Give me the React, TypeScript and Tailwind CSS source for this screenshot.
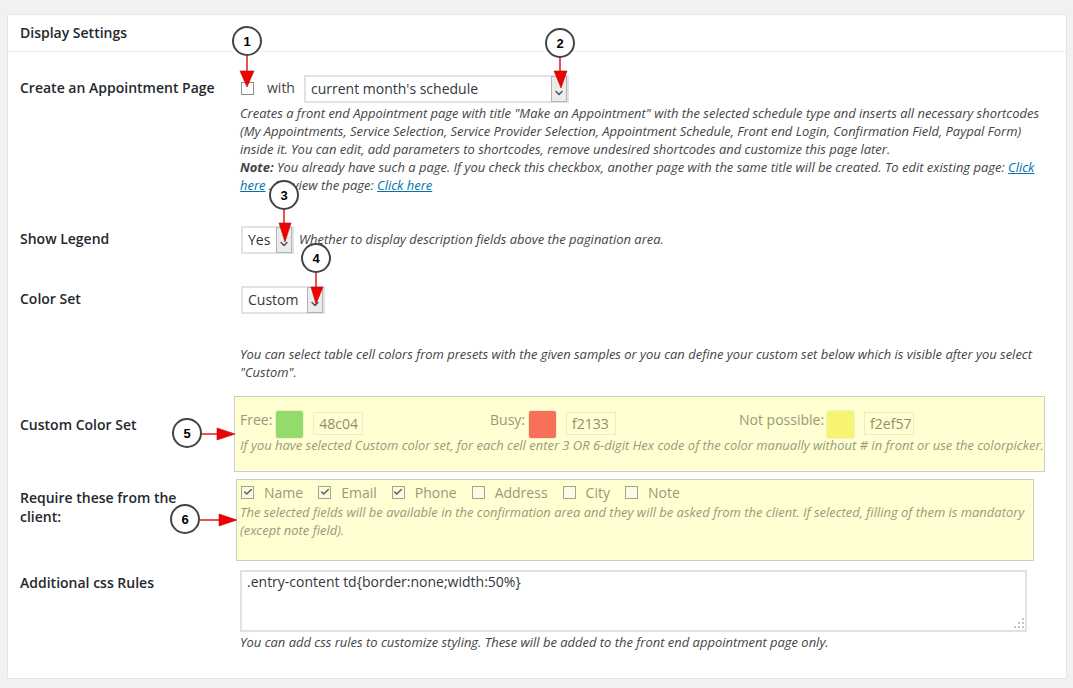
import { Check, ChevronDown } from "lucide-react";
import type { ReactNode } from "react";

const descCls = "text-[12.96px] leading-[18px] italic text-[#444]";

function Select({ text, width }: { text: string; width: string }) {
  return (
    <div className={`flex h-[28px] items-center justify-between border-2 border-[#e2e2e2] bg-white pl-[5px] text-[14px] text-[#32373c] ${width}`}>
      <span className="-mt-[2px]">{text}</span>
      <span className="flex h-[26px] w-[16px] items-end justify-center border border-[#b4b4b4] bg-[#ececec] pb-[2px]">
        <ChevronDown size={12} strokeWidth={3} className="text-[#555]" />
      </span>
    </div>
  );
}

function Box({ checked }: { checked?: boolean }) {
  return (
    <span className="flex h-[13px] w-[13px] shrink-0 items-center justify-center border border-[#a5a58a] bg-[#fbfbe6]">
      {checked && <Check size={10} strokeWidth={3.5} className="text-[#5f5f45]" />}
    </span>
  );
}

function ColorField({ label, swatch, value, width, gap }: { label: string; swatch: string; value: string; width: string; gap: string }) {
  return (
    <div className={`flex items-start ${width}`}>
      <span className="mt-[1px] text-[14px] leading-[18px]">{label}</span>
      <span className={`h-[29px] w-[29px] rounded-[3px] border border-[#f2f2c8] ${gap} ${swatch}`} />
      <span className="mt-[2px] ml-[9px] flex h-[23px] w-[50px] items-center border border-[#ececc4] pr-[2px] pl-[5px] text-[14px] text-[#8f8f6c]">
        <span className="overflow-hidden whitespace-nowrap">{value}</span>
      </span>
    </div>
  );
}

function Row({ label, labelCls, className, children }: { label: string; labelCls: string; className: string; children: ReactNode }) {
  return (
    <div className={`flex ${className}`}>
      <div className="w-[220px] shrink-0">
        <div className={`w-[170px] text-[14px] leading-[19px] font-semibold whitespace-pre-line text-[#23282d] ${labelCls}`}>{label}</div>
      </div>
      <div className="min-w-0 flex-1">{children}</div>
    </div>
  );
}

const fields = [
  { name: "Name", checked: true },
  { name: "Email", checked: true },
  { name: "Phone", checked: true },
  { name: "Address", checked: false },
  { name: "City", checked: false },
  { name: "Note", checked: false },
];

function Arrow({ points, line }: { points: string; line: [number, number, number, number] }) {
  return (
    <>
      <line x1={line[0]} y1={line[1]} x2={line[2]} y2={line[3]} stroke="#e8141c" strokeWidth="1.5" />
      <polygon points={points} fill="#f00000" stroke="#b01010" strokeWidth="0.6" />
    </>
  );
}

function Bubble({ x, y, n }: { x: number; y: number; n: number }) {
  return (
    <g>
      <circle cx={x} cy={y} r="14" fill="#fff" stroke="#444" strokeWidth="2" />
      <text x={x} y={y + 5} textAnchor="middle" fontSize="13" fontWeight="700" fill="#000" fontFamily="'Liberation Sans', sans-serif">
        {n}
      </text>
    </g>
  );
}

// annotation layer drawn over the settings card
function Callouts() {
  return (
    <svg className="pointer-events-none absolute top-0 left-0" width="1073" height="688">
      <Arrow line={[247, 56, 247, 71]} points="240,71 254,71 247,87" />
      <Bubble x={247} y={41} n={1} />
      <Arrow line={[560, 58, 560, 71]} points="554,71 567,71 561,88" />
      <Bubble x={560} y={43} n={2} />
      <Arrow line={[284, 210, 284, 223]} points="279,223 291,223 285,242" />
      <Bubble x={284} y={195} n={3} />
      <Arrow line={[316, 273, 316, 287]} points="311,287 323,287 316,304" />
      <Bubble x={316} y={258} n={4} />
      <Arrow line={[202, 434, 217, 434]} points="217,428 217,440 235,434" />
      <Bubble x={187} y={433} n={5} />
      <Arrow line={[200, 520, 219, 520]} points="219,514 219,526 237,520" />
      <Bubble x={185} y={519} n={6} />
    </svg>
  );
}

export default function App() {
  return (
    <div className="relative h-[688px] overflow-hidden bg-[#f1f1f1] pt-[14px] pr-[6px] pl-[7px] font-['Open_Sans',sans-serif]">
      <div className="h-[665px] border border-[#e5e5e5] bg-white">
        <div className="flex h-[37px] items-center border-b border-[#eeeeee] pb-[2px] pl-[12px] text-[14px] font-semibold text-[#23282d]">
          Display Settings
        </div>
        <div className="pl-[12px]">
          <Row label="Create an Appointment Page" labelCls="w-[210px] mt-[3px]" className="mt-[23px]">
            <div className="flex h-[28px] items-center">
              <span className="-mt-[1px] ml-[1px] h-[13px] w-[13px] border border-[#8c8c8c] bg-white" />
              <span className="-mt-[3px] ml-[13px] text-[14px] text-[#444]">with</span>
              <div className="ml-[9px]">
                <Select text="current month's schedule" width="w-[265px]" />
              </div>
            </div>
            <p className={`mt-[1px] w-[810px] ${descCls}`}>
              Creates a front end Appointment page with title "Make an Appointment" with the selected schedule type and inserts all necessary shortcodes (My Appointments, Service Selection, Service Provider Selection, Appointment Schedule, Front end Login, Confirmation Field, Paypal Form) inside it. You can edit, add parameters to shortcodes, remove undesired shortcodes and customize this page later.
              <br />
              <b>Note:</b> You already have such a page. If you check this checkbox, another page with the same title will be created. To edit existing page: <a className="text-[#0073aa] underline">Click here</a> . To view the page: <a className="text-[#0073aa] underline">Click here</a>
            </p>
          </Row>
          <Row label="Show Legend" labelCls="mt-[3px]" className="mt-[32px]">
            <div className="flex items-center">
              <div className="ml-[1px]">
                <Select text="Yes" width="w-[53px]" />
              </div>
              <span className={`-mt-[2px] ml-[5px] ${descCls}`}>Whether to display description fields above the pagination area.</span>
            </div>
          </Row>
          <Row label="Color Set" labelCls="mt-[3px]" className="mt-[32px]">
            <div className="ml-[1px]">
              <Select text="Custom" width="w-[84px]" />
            </div>
            <p className={`mt-[31px] w-[810px] ${descCls}`}>
              You can select table cell colors from presets with the given samples or you can define your custom set below which is visible after you select "Custom".
            </p>
          </Row>
          <Row label="Custom Color Set" labelCls="mt-[19px]" className="mt-[15px]">
            <div className="-ml-[6px] h-[76px] w-[811px] border border-[#cccccc] bg-[#ffffd2] pt-[13px] pl-[5px] text-[#99997a]">
              <div className="flex">
                <ColorField label="Free:" swatch="bg-[#93dc6c]" value="48c04" width="w-[250px]" gap="ml-[3px]" />
                <ColorField label="Busy:" swatch="bg-[#f9705a]" value="f2133" width="w-[249px]" gap="ml-[3px]" />
                <ColorField label="Not possible:" swatch="bg-[#f7f373]" value="f2ef57" width="w-[200px]" gap="ml-[2px]" />
              </div>
              <p className="-mt-[3px] text-[12.96px] leading-[18px] whitespace-nowrap italic">
                If you have selected Custom color set, for each cell enter 3 OR 6-digit Hex code of the color manually without # in front or use the colorpicker.
              </p>
            </div>
          </Row>
          <Row label="Require these from the client:" labelCls="mt-[9px]" className="mt-[7px]">
            <div className="-ml-[4px] h-[82px] w-[798px] border border-[#cccccc] bg-[#ffffd2] pt-[3px] pl-[3px] text-[#99997a]">
              <div className="flex h-[18px] items-center gap-[15px] pl-[1px] text-[14px]">
                {fields.map((f) => (
                  <label key={f.name} className="flex items-center gap-[10px]">
                    <Box checked={f.checked} />
                    {f.name}
                  </label>
                ))}
              </div>
              <p className="mt-[2px] text-[12.96px] leading-[18px] italic">
                The selected fields will be available in the confirmation area and they will be asked from the client. If selected, filling of them is mandatory (except note field).
              </p>
            </div>
          </Row>
          <Row label="Additional css Rules" labelCls="mt-[3px]" className="mt-[9px]">
            <div className="relative w-[787px]">
              <textarea
                readOnly
                defaultValue=".entry-content td{border:none;width:50%}"
                className="block h-[62px] w-full resize-none border-2 border-[#e2e2e2] bg-white px-[5px] py-0 text-[14px] leading-[20px] text-[#32373c] outline-none"
              />
              <svg className="absolute right-[2px] bottom-[2px]" width="12" height="12" viewBox="0 0 12 12" fill="#c4c4c4">
                <rect x="9" y="0" width="2" height="2" />
                <rect x="5" y="4" width="2" height="2" />
                <rect x="9" y="4" width="2" height="2" />
                <rect x="1" y="8" width="2" height="2" />
                <rect x="5" y="8" width="2" height="2" />
                <rect x="9" y="8" width="2" height="2" />
              </svg>
            </div>
            <p className={`mt-[1px] ${descCls}`}>You can add css rules to customize styling. These will be added to the front end appointment page only.</p>
          </Row>
        </div>
      </div>
      <Callouts />
    </div>
  );
}
